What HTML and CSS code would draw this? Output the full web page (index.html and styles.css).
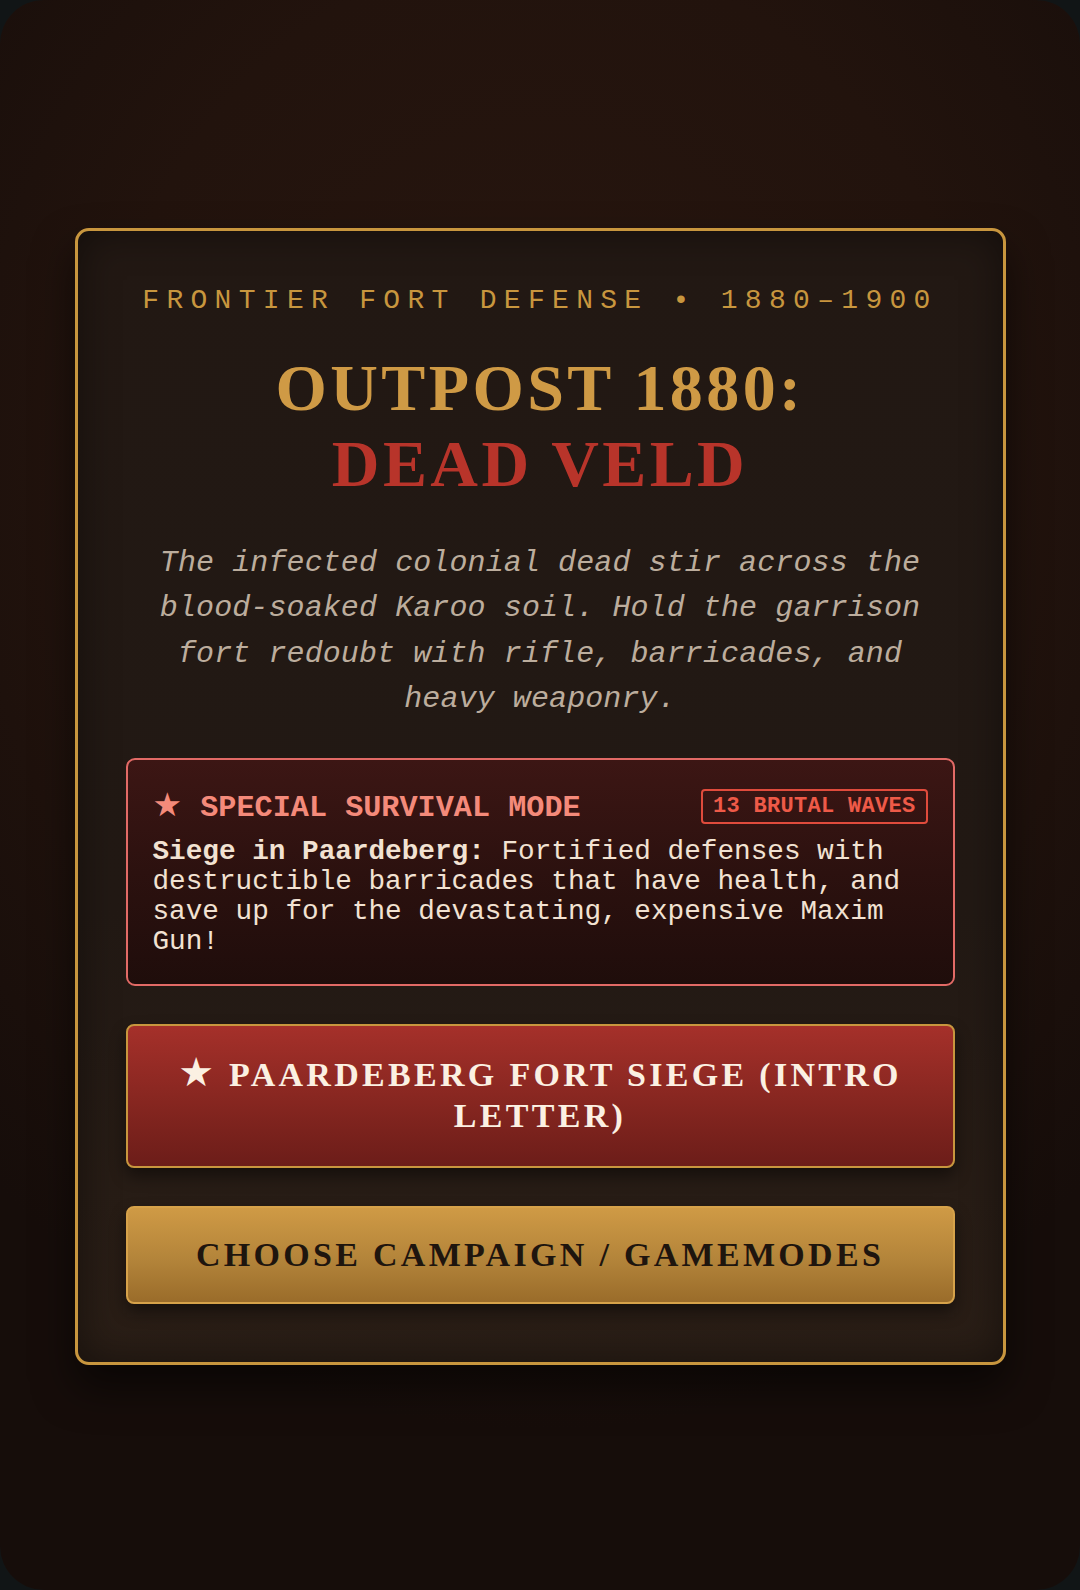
FILE: index.html
```html
<!DOCTYPE html>
<html lang="en">
<head>
<meta charset="utf-8">
<title>Outpost 1880: Dead Veld</title>
<link rel="stylesheet" href="styles.css">
</head>
<body>
<div class="screen">
  <main class="card">
    <p class="kicker">FRONTIER FORT DEFENSE • 1880–1900</p>
    <h1 class="title"><span class="title-gold">OUTPOST 1880:</span><span class="title-red">DEAD VELD</span></h1>
    <p class="intro">The infected colonial dead stir across the blood-soaked Karoo soil. Hold the garrison fort redoubt with rifle, barricades, and heavy weaponry.</p>
    <section class="mode">
      <div class="mode-head">
        <span class="mode-title"><span class="mode-star">★</span> SPECIAL SURVIVAL MODE</span>
        <span class="mode-badge">13 BRUTAL WAVES</span>
      </div>
      <p class="mode-text"><strong>Siege in Paardeberg:</strong> Fortified defenses with destructible barricades that have health, and save up for the devastating, expensive Maxim Gun!</p>
    </section>
    <button class="btn btn-red" type="button"><span class="btn-star">★</span> PAARDEBERG FORT SIEGE (INTRO LETTER)</button>
    <button class="btn btn-gold" type="button">CHOOSE CAMPAIGN / GAMEMODES</button>
  </main>
</div>
</body>
</html>
```
FILE: styles.css
```css
html, body {
  margin: 0;
  padding: 0;
}
body {
  background: #111516;
  width: 1080px;
  height: 1590px;
  overflow: hidden;
}
.screen {
  width: 1080px;
  height: 1590px;
  border-radius: 44px;
  background: radial-gradient(ellipse 75% 60% at 50% 30%, #28160f 0%, #22130d 55%, #160d0a 100%);
  display: flex;
  align-items: center;
  justify-content: center;
  box-sizing: border-box;
}
.card {
  width: 931px;
  box-sizing: border-box;
  margin-top: 3px;
  border: 3px solid #c8963e;
  border-radius: 14px;
  background: linear-gradient(180deg, #221813 0%, #221914 60%, #2a1e16 100%);
  box-shadow: inset 0 0 40px rgba(0,0,0,0.45), 0 22px 40px rgba(0,0,0,0.55);
  padding: 54px 48px 58px;
  display: flex;
  flex-direction: column;
  align-items: stretch;
  text-align: center;
}
.kicker {
  margin: 0;
  font-family: "Liberation Mono", "DejaVu Sans Mono", monospace;
  font-size: 28px;
  line-height: 31px;
  letter-spacing: 7.3px;
  color: #c8963e;
}
.title {
  margin: 34px 0 0;
  font-family: "Liberation Serif", "Times New Roman", serif;
  font-weight: bold;
  font-size: 66px;
  line-height: 76px;
  letter-spacing: 3.4px;
  display: flex;
  flex-direction: column;
  align-items: center;
}
.title-gold { color: #cf9a45; }
.title-red { color: #b8342a; }
.intro {
  margin: 39px 0 0;
  padding: 0 20px;
  font-family: "Liberation Mono", "DejaVu Sans Mono", monospace;
  font-style: italic;
  font-size: 30px;
  line-height: 45.6px;
  letter-spacing: 0.1px;
  color: #bcad9d;
}
.mode {
  margin-top: 35px;
  border: 2px solid #e26a66;
  border-radius: 9px;
  background: linear-gradient(180deg, #3c1614 0%, #2c110f 50%, #1f0d0b 100%);
  padding: 28px 25px 27px;
  text-align: left;
}
.mode-head {
  display: flex;
  align-items: center;
  justify-content: space-between;
  gap: 16px;
}
.mode-title {
  font-family: "Liberation Mono", "DejaVu Sans Mono", monospace;
  font-weight: bold;
  font-size: 30.2px;
  line-height: 33px;
  color: #f48a7a;
}
.mode-star {
  font-family: "DejaVu Sans", sans-serif;
  font-weight: normal;
  font-size: 33px;
}
.mode-badge {
  font-family: "Liberation Mono", "DejaVu Sans Mono", monospace;
  font-weight: bold;
  font-size: 22px;
  line-height: 25px;
  letter-spacing: 0.3px;
  color: #ee5a48;
  border: 2px solid #e04b3c;
  border-radius: 4px;
  padding: 3px 10px;
}
.mode-text {
  margin: 12px 0 0;
  font-family: "Liberation Mono", "DejaVu Sans Mono", monospace;
  font-size: 27.7px;
  line-height: 30px;
  color: #f2e2d2;
}
.mode-text strong {
  font-weight: bold;
}
.btn {
  display: block;
  width: 100%;
  box-sizing: border-box;
  border-radius: 8px;
  font-family: "Liberation Serif", "Times New Roman", serif;
  font-weight: bold;
  font-size: 34px;
  line-height: 40.8px;
  letter-spacing: 3.3px;
  text-align: center;
  padding: 29px 30px;
  cursor: pointer;
  box-shadow: 0 8px 16px rgba(0,0,0,0.45);
}
.btn-red {
  margin-top: 38px;
  border: 2px solid #c8963e;
  background: linear-gradient(180deg, #a5302a 0%, #862620 55%, #6c1d19 100%);
  color: #fbf0e2;
}
.btn-star {
  font-family: "DejaVu Sans", sans-serif;
  font-weight: bold;
  font-size: 40px;
  line-height: 30px;
}
.btn-gold {
  margin-top: 38px;
  border: 2px solid #d6a24a;
  background: linear-gradient(180deg, #cf9a45 0%, #b3843a 55%, #9a6c2a 100%);
  color: #1e150e;
  padding-top: 27px;
  padding-bottom: 27px;
  letter-spacing: 3.3px;
}
```
